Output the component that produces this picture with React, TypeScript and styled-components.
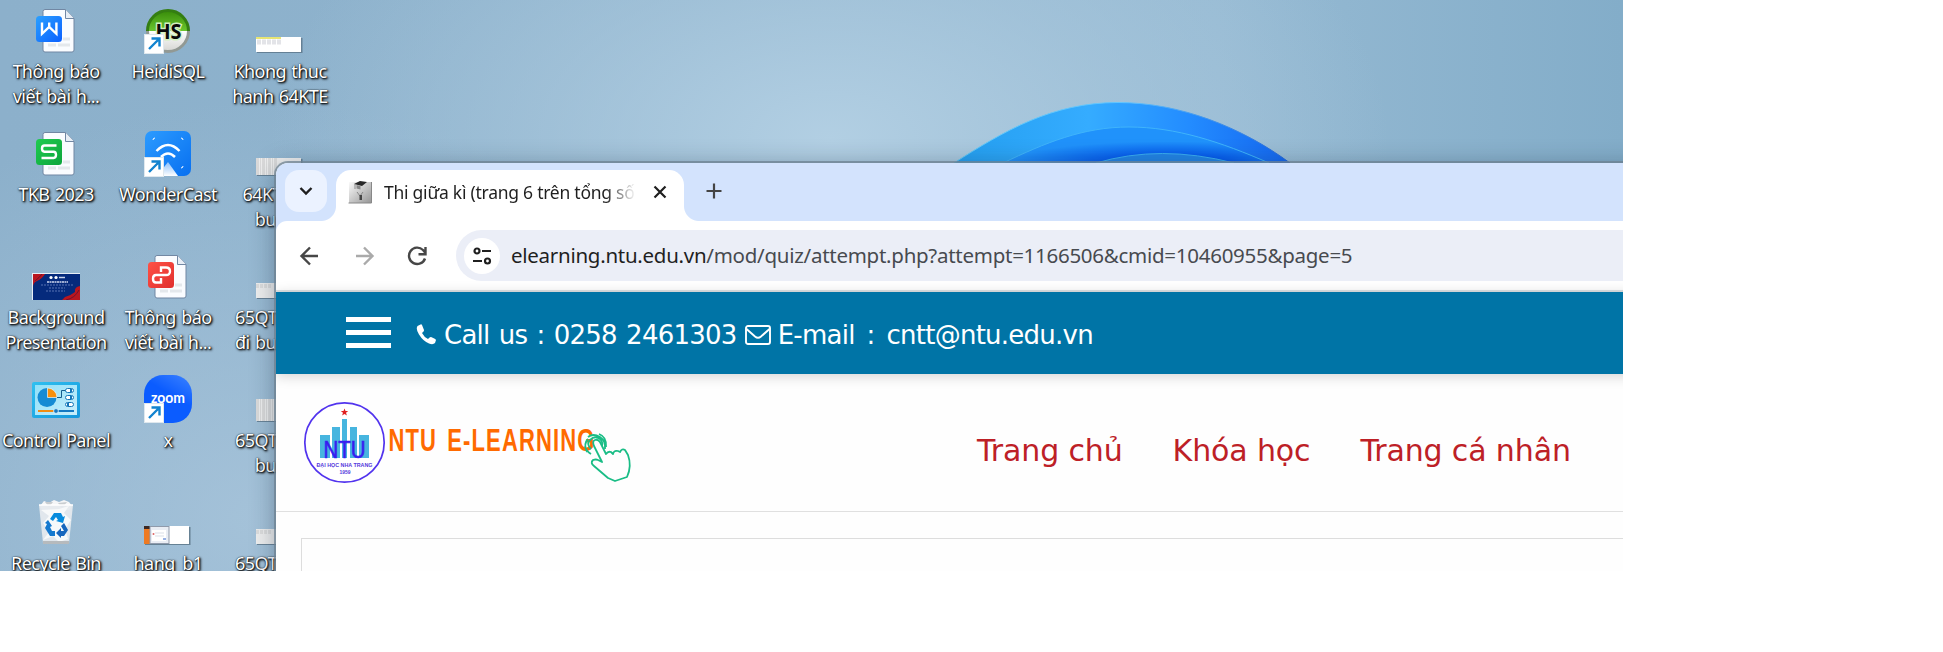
import React from 'react';
import styled, { createGlobalStyle } from 'styled-components';

const GlobalStyle = createGlobalStyle`
  * { box-sizing: border-box; }
  body { margin: 0; background: #fff; }
  svg { display: block; flex: none; }
`;

const Desktop = styled.main`
  position: relative;
  width: 1623px;
  height: 571px;
  overflow: hidden;
  background:
    radial-gradient(ellipse 560px 330px at 830px 140px, #b2cfe3 0%, rgba(171, 201, 222, 0.6) 50%, rgba(160, 192, 215, 0) 100%),
    radial-gradient(ellipse 500px 420px at 260px 520px, rgba(170, 198, 220, 0.8), rgba(160, 190, 213, 0)),
    linear-gradient(90deg, #8cb0cb 0%, #8fb4ce 45%, #96bad3 75%, #83adc9 100%);
`;

const Bloom = styled.svg`
  position: absolute;
  left: 940px;
  top: 90px;
`;

const IconGrid = styled.div`
  display: grid;
  grid-auto-flow: column;
  grid-template-rows: repeat(5, 123px);
  grid-auto-columns: 112px;
  width: 336px;
`;

const Shortcut = styled.div`
  display: flex;
  flex-direction: column;
  align-items: center;
  padding-top: 6px;
`;

const Art = styled.div`
  display: flex;
  flex-direction: column;
  align-items: center;
  justify-content: flex-end;
  height: 48px;
`;

const Label = styled.div`
  margin-top: 5px;
  font: 18px/24.6px 'Noto Sans', 'Open Sans', sans-serif;
  letter-spacing: -0.55px;
  word-spacing: 1.2px;
  color: #fff;
  text-align: center;
  white-space: pre;
  text-shadow: 0 0 1px #000, 1px 1px 2px #000, 1px 1px 3px rgba(0, 0, 0, 0.8);
`;

const BrowserWindow = styled.section`
  position: absolute;
  left: 276px;
  top: 163px;
  width: 1400px;
  height: 430px;
  border-radius: 12px 0 0 0;
  background: #fefefe;
  box-shadow: 0 0 0 2px rgba(110, 130, 145, 0.75), 0 4px 26px rgba(20, 40, 60, 0.4);
  overflow: hidden;
`;

const TabStrip = styled.div`
  display: flex;
  height: 58px;
  padding: 7px 0 0 9px;
  background: #d3e3fd;
`;

const SearchTabs = styled.button`
  display: grid;
  place-items: center;
  width: 42px;
  height: 42px;
  margin-right: 9px;
  padding: 0;
  border: 0;
  border-radius: 14px;
  background: #ebf2ff;
`;

const Tab = styled.div`
  position: relative;
  display: flex;
  align-items: center;
  width: 348px;
  height: 51px;
  padding: 0 17px 8px 12px;
  border-radius: 15px 15px 0 0;
  background: #fff;
  &::before, &::after {
    content: '';
    position: absolute;
    bottom: 0;
    width: 15px;
    height: 15px;
  }
  &::before { left: -15px; background: radial-gradient(circle at 0 0, transparent 14.5px, #fff 15.5px); }
  &::after { right: -15px; background: radial-gradient(circle at 100% 0, transparent 14.5px, #fff 15.5px); }
`;

const TabTitle = styled.span`
  width: 252px;
  margin: 1px 17px 0 12px;
  overflow: hidden;
  white-space: nowrap;
  font: 17.5px/26px 'Noto Sans', 'Open Sans', sans-serif;
  letter-spacing: -0.25px;
  color: #1f1f1f;
  mask-image: linear-gradient(90deg, #000 88%, transparent 100%);
`;

const NewTab = styled.button`
  width: 42px;
  height: 42px;
  margin-left: 9px;
  padding: 0;
  display: grid;
  place-items: center;
  border: 0;
  background: none;
`;

const StripBase = styled.div`
  background: #d3e3fd;
`;

const Toolbar = styled.div`
  display: flex;
  align-items: center;
  height: 71px;
  padding-left: 20px;
  border-bottom: 2px solid #dde2e4;
  border-radius: 11px 0 0 0;
  background: #fff;
`;

const NavIcons = styled.div`
  display: flex;
  gap: 26px;
  width: 160px;
`;

const AddressBar = styled.div`
  display: flex;
  align-items: center;
  flex: 1;
  height: 51px;
  padding-left: 8px;
  border-radius: 26px 0 0 26px;
  background: #ebeef7;
`;

const SiteInfo = styled.span`
  display: grid;
  place-items: center;
  width: 36px;
  height: 36px;
  border-radius: 50%;
  background: #fff;
`;

const Url = styled.span`
  margin: -2px 0 0 11px;
  font: 20.5px/30px 'Noto Sans', 'Open Sans', sans-serif;
  letter-spacing: -0.27px;
  white-space: nowrap;
  color: #474a4f;
`;

const Host = styled.span`
  color: #1f1f1f;
`;

const ContactBar = styled.div`
  position: relative;
  display: flex;
  align-items: center;
  height: 82px;
  padding-left: 70px;
  background: #0074a6;
  box-shadow: 0 2px 12px rgba(0, 0, 0, 0.18);
`;

const Burger = styled.div`
  display: flex;
  flex-direction: column;
  gap: 8px;
  width: 45px;
  margin: -1px 25px 0 0;
`;

const BurgerLine = styled.span`
  height: 5px;
  background: #fff;
`;

const ContactIcon = styled.svg<{ $drop: number }>`
  margin-top: ${p => p.$drop}px;
`;

const Contact = styled.span<{ $wordGap: number }>`
  margin: 3px 8px 0 7px;
  font: 26px/36px 'DejaVu Sans', Verdana, sans-serif;
  letter-spacing: -0.75px;
  word-spacing: ${p => p.$wordGap}px;
  white-space: pre;
  color: #fff;
`;

const SiteHeader = styled.header`
  display: flex;
  height: 138px;
  border-bottom: 1px solid #e0e0e0;
`;

const Menu = styled.nav`
  display: flex;
  margin: 56px 0 0 341px;
  gap: 50px;
`;

const MenuLink = styled.a`
  font: 30px/42px 'DejaVu Sans', Verdana, sans-serif;
  letter-spacing: -0.13px;
  white-space: nowrap;
  color: #bd2026;
`;

const ContentPanel = styled.div`
  height: 80px;
  margin: 26px 0 0 25px;
  border-top: 1px solid #ddd;
  border-left: 1px solid #ddd;
`;

const ShortcutArrow = () => (
  <g>
    <rect x="0" y="28" width="20" height="20" fill="#dfe8ee" />
    <rect x="1" y="29" width="18" height="18" fill="#fff" />
    <path d="M5 43 15 33M7.500 32.500h8v8" fill="none" stroke="#1283cf" strokeWidth="2.400" />
  </g>
);

const DocIcon = ({ from, to, kind }: { from: string; to: string; kind: 'w' | 's' | 'p' }) => (
  <svg width="40" height="46" viewBox="0 0 40 46">
    <defs>
      <linearGradient id={`doc-${kind}`} x1="0" y1="0" x2="1" y2="1">
        <stop stopColor={from} /><stop offset="1" stopColor={to} />
      </linearGradient>
    </defs>
    <path d="M9 1.500h20.500l8.500 9V42q0 2-2 2H9q-2 0-2-2V3.500q0-2 2-2Z" fill="#fafcff" stroke="#7187a3" />
    <path d="M29.500 1.500v9H38" fill="#e8eef5" stroke="#7187a3" />
    <path d="M12 37h8M22 37h12M27 31h7" stroke="#e4e8ec" strokeWidth="3" />
    <rect x="0" y="8" width="26" height="26" rx="3.500" fill={`url(#doc-${kind})`} />
    {kind === 'w' && <path d="M6 14.500v11.300l7.200-6.800 7.200 6.800V14.500M13.200 20v-5.500" fill="none" stroke="#fff" strokeWidth="2.400" />}
    {kind === 's' && <path d="M20.500 14.500H8.500q-2.500 0-2.500 3t2.500 3.200h9q2.500 0 2.500 3.100t-2.500 3.200H5.500" fill="none" stroke="#fff" strokeWidth="2.400" />}
    {kind === 'p' && <path d="M13 18v-4.500h5q4 0 4 3.800T18 21H8q-3 0-3 3.700T8 28.500h5V24" fill="none" stroke="#fff" strokeWidth="2.400" />}
  </svg>
);

const HeidiIcon = () => (
  <svg width="48" height="48" viewBox="0 0 48 48">
    <defs>
      <linearGradient id="heidi" x2="0" y2="1"><stop stopColor="#378b09" /><stop offset=".5" stopColor="#6bc62f" /><stop offset=".5" stopColor="#fff" /><stop offset="1" stopColor="#d5d5d2" /></linearGradient>
    </defs>
    <circle cx="24" cy="25" r="20.500" fill="url(#heidi)" />
    <path d="M3.500 25a20.500 20.500 0 0 1 41 0" fill="none" stroke="#347e12" strokeWidth="3" />
    <path d="M3.500 25a20.500 20.500 0 0 0 41 0" fill="none" stroke="#929994" strokeWidth="3" />
    <text x="24.500" y="32.500" textAnchor="middle" textLength="26" lengthAdjust="spacingAndGlyphs" fontFamily="Open Sans" fontWeight="700" fontSize="22" fill="#0a0a0a" stroke="#d4f0c0" strokeWidth="3" paintOrder="stroke">HS</text>
    <ShortcutArrow />
  </svg>
);

const WonderIcon = () => (
  <svg width="48" height="48" viewBox="0 0 48 48">
    <defs>
      <linearGradient id="wonder" x2="1" y2="1"><stop stopColor="#2c9bff" /><stop offset="1" stopColor="#0870f0" /></linearGradient>
      <linearGradient id="beam" x2="0" y2="1"><stop stopColor="#fff" stopOpacity=".5" /><stop offset="1" stopColor="#fff" /></linearGradient>
    </defs>
    <rect x="1" y="2" width="46" height="45" rx="7" fill="url(#wonder)" />
    <path d="M9 11q0-2 2-2M37 9q2 0 2 2M39 37q0 2-2 2" fill="none" stroke="#fff" />
    <path d="M12.500 22q11.500-12 23 0M17 28q7-7 14 0" fill="none" stroke="#fff" strokeWidth="2.500" />
    <path d="M13 47 24 33 34 47Z" fill="url(#beam)" />
    <ShortcutArrow />
  </svg>
);

const ZoomIcon = () => (
  <svg width="48" height="48" viewBox="0 0 48 48">
    <defs><linearGradient id="zm" x1="1" y1="0" x2=".7" y2=".5"><stop stopColor="#3d83ff" /><stop offset="1" stopColor="#0b5cff" /></linearGradient></defs>
    <rect width="48" height="48" rx="19" fill="url(#zm)" />
    <text x="24" y="28" textAnchor="middle" textLength="34" lengthAdjust="spacingAndGlyphs" fontFamily="Lato, sans-serif" fontWeight="700" fontSize="15.500" fill="#fff">zoom</text>
    <ShortcutArrow />
  </svg>
);

const ControlPanelIcon = () => (
  <svg width="48" height="41" viewBox="0 0 48 41">
    <defs>
      <linearGradient id="cpl" x2="1" y2="1"><stop stopColor="#8fe0f9" /><stop offset="1" stopColor="#c9eefb" /></linearGradient>
      <linearGradient id="cplEdge" x2="1" y2="1"><stop stopColor="#2fc0f0" /><stop offset="1" stopColor="#1597dc" /></linearGradient>
    </defs>
    <rect width="48" height="36" rx="2" fill="url(#cplEdge)" />
    <rect x="3" y="3" width="42" height="30" fill="url(#cpl)" />
    <circle cx="15" cy="15.500" r="9.500" fill="#168bd4" />
    <path d="M15.500 15.500V6a9.500 9.500 0 0 1 9.500 9.500Z" fill="#f7900c" stroke="#e9f8fd" strokeWidth=".7" />
    <path d="M25 15.500h4.500v-7H34" fill="none" stroke="#155d8d" />
    <g fill="#fff" stroke="#1577b9">
      <rect x="33.500" y="6.500" width="8" height="4" rx="2" /><rect x="33.500" y="13.500" width="8" height="4" rx="2" /><rect x="33.500" y="20.500" width="8" height="4" rx="2" />
    </g>
    <path d="M38 8.500h2M38 15.500h2M35 22.500h2" stroke="#1577b9" strokeWidth="3" />
    <path d="M6 29h17" stroke="#f08c12" strokeWidth="2" /><path d="M25 29h17" stroke="#1479c2" strokeWidth="2" />
    <circle cx="24" cy="29" r="2.400" fill="#1479c2" stroke="#e8f8ff" strokeWidth=".8" />
  </svg>
);

const RecycleIcon = () => (
  <svg width="38" height="46" viewBox="0 0 38 46">
    <path d="m3 6 4-5 5 2 5-3 5 2 5-2 5 2 3 4-3 4H5Z" fill="#f5f6f7" />
    <path d="m8 2 4 5 4-5M21 3l4 5 5-6" fill="#c9cdd0" />
    <path d="M2 5h34l-4 38q-13 2-26 0Z" fill="#e6eaee" fillOpacity=".94" />
    <path d="m4 10 8 6-6 7 6 9-6 8 10-4 6 6 9-3-3-10 6-9-7-7 5-7-10 3Z" fill="#f7f9fa" />
    <path d="M2 5h34" stroke="#fff" strokeWidth="1.500" /><path d="M6 42.500h26" stroke="#b6babd" strokeWidth="3" />
    <g fill="#078bdd">
      <path d="m13 19 4-6h7l2 4 2-1-2 7-7-2 2-1-2-3-3 4Z" />
      <path d="m11 20 4 6-2 1 2 4h3v5h-5l-5-8 2-4-2-1Z" fill="#1579cf" />
      <path d="m27 23 4 7-4 6h-3v2l-5-5 5-5v3h3l-3-5Z" fill="#1766bd" />
    </g>
  </svg>
);

const BackgroundIcon = () => (
  <svg width="48" height="27" viewBox="0 0 48 27">
    <rect width="48" height="27" fill="#e8eef5" /><rect x="1" y="1" width="47" height="26" fill="#052a7c" />
    <path d="M1 1h12Q10 6 5 8 2 9 1 13ZM48 13q-6 1-5 6-5 4-10 5l-3 3h18Z" fill="#b9161f" />
    <path d="M3 8q5-4 7-7M34 27q9-2 13-10" fill="none" stroke="#6c1232" />
    <circle cx="19" cy="4.500" r="1.600" fill="#fff" /><circle cx="24" cy="4.500" r="1.600" fill="#fff" /><path d="M27 4.500h6" stroke="#cbd5ed" strokeWidth="1.500" />
    <path d="M15 9h21" stroke="#cfd8ee" strokeWidth="1.500" strokeDasharray="2 .5" />
    <path d="M9 12h32M17 15h16M14 18h19" stroke="#6c86c2" strokeWidth=".8" strokeDasharray="2 1" />
  </svg>
);

const SheetThumb = ({ h, tone }: { h: number; tone: 'yellow' | 'grey' | 'plain' }) => (
  <svg width="48" height={h + 2} viewBox={`0 0 48 ${h + 2}`}>
    <rect x="1" y="1" width="45.500" height={h} fill="#526b7d" fillOpacity=".7" />
    <rect width="45" height={h} fill={tone === 'yellow' ? '#fff' : '#eee'} />
    {tone === 'yellow' && <><path d="M0 1h25" stroke="#dfdc45" strokeWidth="1.500" /><path d="M1 5h24" stroke="#e3e4e8" strokeWidth="5" strokeDasharray="4 1" /></>}
    {tone === 'grey' && <path d={`M0 ${h / 2}h22`} stroke="#dadada" strokeWidth={h} strokeDasharray="3 1 1 1" />}
    {tone === 'plain' && <path d="M0 3h16" stroke="#ddd" strokeWidth="4" strokeDasharray="3 1" />}
  </svg>
);

const HangThumb = () => (
  <svg width="48" height="20" viewBox="0 0 48 20">
    <rect x="1" y="1" width="45.500" height="18" fill="#4d6678" fillOpacity=".7" />
    <rect width="45" height="18" fill="#fff" />
    <rect width="6" height="18" fill="#ee7a22" /><path d="M0 0h6v3H0Z" fill="#3b2823" />
    <rect x="6" y=".5" width="19" height="17" fill="#e9edf4" stroke="#8f9aab" />
    <rect x="8" y="4" width="14" height="11" fill="#fff" /><circle cx="9.500" cy="8" r="1" fill="#d66" />
    <path d="M11 7h9M11 10h9" stroke="#c9d0dc" strokeWidth=".7" /><path d="M19 13h3" stroke="#36c" />
  </svg>
);

const shortcuts: { label: string; art: React.ReactNode }[] = [
  { label: 'Thông báo\nviết bài h...', art: <DocIcon kind="w" from="#2aa0ff" to="#0b60ff" /> },
  { label: 'TKB 2023', art: <DocIcon kind="s" from="#1fcb4f" to="#0da53c" /> },
  { label: 'Background\nPresentation', art: <BackgroundIcon /> },
  { label: 'Control Panel', art: <ControlPanelIcon /> },
  { label: 'Recycle Bin', art: <RecycleIcon /> },
  { label: 'HeidiSQL', art: <HeidiIcon /> },
  { label: 'WonderCast', art: <WonderIcon /> },
  { label: 'Thông báo\nviết bài h...', art: <DocIcon kind="p" from="#ff5246" to="#e02f2e" /> },
  { label: 'x', art: <ZoomIcon /> },
  { label: 'hang_b1', art: <HangThumb /> },
  { label: 'Khong thuc\nhanh 64KTE', art: <SheetThumb h={15} tone="yellow" /> },
  { label: '64KTE thi\nbuổi 1', art: <SheetThumb h={17} tone="grey" /> },
  { label: '65QTKD 12\nđi buổi học', art: <SheetThumb h={15} tone="plain" /> },
  { label: '65QTKD 12\nbuổi 1', art: <SheetThumb h={22} tone="grey" /> },
  { label: '65QTKD 12', art: <SheetThumb h={15} tone="plain" /> },
];

const BloomArt = () => (
  <Bloom width="370" height="75" viewBox="940 90 370 75">
    <defs>
      <linearGradient id="petal" x2="1"><stop stopColor="#249ff0" /><stop offset=".4" stopColor="#35acff" /><stop offset=".7" stopColor="#238cff" /><stop offset="1" stopColor="#1466ef" /></linearGradient>
      <radialGradient id="inner" cx=".62" cy="1" r=".6"><stop stopColor="#004be2" /><stop offset=".35" stopColor="#0459ed" /><stop offset="1" stopColor="#2092fb" /></radialGradient>
      <linearGradient id="rim" x2="1"><stop stopColor="#64c9f5" /><stop offset=".5" stopColor="#62c6ff" /><stop offset="1" stopColor="#2366d8" /></linearGradient>
    </defs>
    <path d="M954 163C1004 131 1052 102.500 1118 102.500c62 0 124 25 172 60.500Z" fill="url(#petal)" stroke="url(#rim)" />
    <path d="M1003 163c42-20 80-36 126-36 47 0 92 15 140 36Z" fill="url(#inner)" stroke="#3fb4fb" />
    <path d="M1096 163q64-19 138 0Z" fill="#2284e6" stroke="#3aaff2" />
  </Bloom>
);

const LogoArt = () => (
  <svg width="360" height="120" viewBox="276 374 360 120">
    <circle cx="344.500" cy="442.500" r="39.700" fill="#fff" stroke="#5234ee" strokeWidth="1.700" />
    <path d="m344.500 408.500 1 2.600h2.700l-2.200 1.700.9 2.800-2.400-1.700-2.400 1.700.9-2.800-2.200-1.700h2.700Z" fill="#e02020" />
    <path d="M320 435h10v23h-10ZM332 427h8v31h-8ZM342 419h5v39h-5ZM350 427h7v31h-7ZM359 435h10v23h-10Z" fill="#47b5df" />
    <text x="323.500" y="458" textLength="42" lengthAdjust="spacingAndGlyphs" fontFamily="Liberation Sans" fontSize="23" fill="#381df0" stroke="#381df0" strokeWidth=".6">NTU</text>
    <text x="316.500" y="466.500" textLength="56" lengthAdjust="spacingAndGlyphs" fontFamily="Liberation Sans" fontWeight="700" fontSize="6" fill="#5338dc">ĐẠI HỌC NHA TRANG</text>
    <text x="339.500" y="473.500" textLength="11" lengthAdjust="spacingAndGlyphs" fontFamily="Liberation Sans" fontWeight="700" fontSize="5.500" fill="#5338dc">1959</text>
    <text transform="translate(388.500 451) scale(.71 1)" textLength="290" wordSpacing="4" fontFamily="Liberation Sans" fontWeight="700" fontSize="31" fill="#ff6a00">NTU E-LEARNING</text>
    <g transform="translate(280 380)" fill="none" stroke="#1abd86" strokeWidth="1.800" strokeLinejoin="round">
      <path d="M322 82 314 66q-2-5 1-6t5 2l6 12q2-3 5-2l2 2q1-4 5-3l2 1q2-4 5-2l3 5q4 11-1 22l-12 4-7-3-14-12q-4-3-1-6 3-1 5 0Z" />
      <path d="M311 69q-5-5-1-9 5-5 10-1 3 3 2 7M307 72q-4-8 1-13M308 57q5-4 12 0 6 4 5 12M319 54q8 3 7 13M311 74q-5-3-6-8" />
    </g>
  </svg>
);

export default function App() {
  return (
    <>
      <GlobalStyle />
      <Desktop>
        <BloomArt />
        <IconGrid>
          {shortcuts.map((s, i) => (
            <Shortcut key={i}>
              <Art>{s.art}</Art>
              <Label>{s.label}</Label>
            </Shortcut>
          ))}
        </IconGrid>
        <BrowserWindow>
          <TabStrip>
            <SearchTabs>
              <svg width="16" height="16" viewBox="0 0 16 16"><path d="m2.500 5 5.500 5.500L13.500 5" fill="none" stroke="#1f1f1f" strokeWidth="2.400" /></svg>
            </SearchTabs>
            <Tab>
              <svg width="24" height="24" viewBox="0 0 24 24">
                <defs><linearGradient id="fav" x2="1" y2="1"><stop stopColor="#fafafa" /><stop offset="1" stopColor="#969696" /></linearGradient></defs>
                <path d="M1 2h22v21H1Z" fill="url(#fav)" /><path d="M.5 23h23V2" fill="none" stroke="#888" />
                <path d="m6 4 6-3 7 1-5 4Z" fill="#262626" /><path d="M8.500 5v3.500l4 1V6" fill="#888" /><path d="m9 12 3 4 3-4M7 4v5" stroke="#777" strokeWidth=".8" fill="none" />
                <path d="M11.500 15h2.500v5h-2.500Z" fill="#444" />
              </svg>
              <TabTitle>Thi giữa kì (trang 6 trên tổng số</TabTitle>
              <svg width="14" height="14" viewBox="0 0 14 14"><path d="m1.500 1.500 11 11M12.500 1.500l-11 11" stroke="#1f1f1f" strokeWidth="2.200" /></svg>
            </Tab>
            <NewTab>
              <svg width="18" height="18" viewBox="0 0 18 18"><path d="M9 1.500v15M1.500 9h15" stroke="#444" strokeWidth="2.200" /></svg>
            </NewTab>
          </TabStrip>
          <StripBase>
            <Toolbar>
              <NavIcons>
                <svg width="28" height="28" viewBox="0 0 28 28"><path d="M22 14H6M14 5.500 5.500 14l8.500 8.500" fill="none" stroke="#474747" strokeWidth="2.400" /></svg>
                <svg width="28" height="28" viewBox="0 0 28 28"><path d="M6 14h16M14 5.500l8.500 8.500-8.500 8.500" fill="none" stroke="#aaa" strokeWidth="2.400" /></svg>
                <svg width="28" height="28" viewBox="0 0 28 28"><path d="M21 16.500A8.200 8.200 0 1 1 19 8l2.500 3M21.500 5v7.200h-7" fill="none" stroke="#474747" strokeWidth="2.400" /></svg>
              </NavIcons>
              <AddressBar>
                <SiteInfo>
                  <svg width="20" height="18" viewBox="0 0 20 18" fill="none" stroke="#1f1f1f" strokeWidth="2.200"><circle cx="5" cy="4" r="2.500" /><path d="M10 4h9M1 14h9" /><circle cx="15.500" cy="14" r="2.500" /></svg>
                </SiteInfo>
                <Url><Host>elearning.ntu.edu.vn</Host>/mod/quiz/attempt.php?attempt=1166506&amp;cmid=10460955&amp;page=5</Url>
              </AddressBar>
            </Toolbar>
          </StripBase>
          <ContactBar>
            <Burger><BurgerLine /><BurgerLine /><BurgerLine /></Burger>
            <ContactIcon $drop={2} width="21" height="21" viewBox="0 0 21 21"><path d="M4.500.5 1.500 2Q-.5 5 3 10.500 7 17 13 19.500q4 1.500 6-.5l1-3q0-1-5-3-1-.3-3 2-4-2-6-6 2.500-2 2-3L6 1Q5.500 0 4.500.5Z" fill="#fff" /></ContactIcon>
            <Contact $wordGap={1.7}>Call us : 0258 2461303</Contact>
            <ContactIcon $drop={4} width="26" height="20" viewBox="0 0 26 20" fill="none" stroke="#fff" strokeWidth="1.900"><rect x="1" y="1" width="24" height="18" rx="2" /><path d="m1.500 4 8.500 7.500q3 2.500 6 0L24.500 4" /></ContactIcon>
            <Contact $wordGap={4.4}>E-mail : cntt@ntu.edu.vn</Contact>
          </ContactBar>
          <SiteHeader>
            <LogoArt />
            <Menu>
              <MenuLink>Trang chủ</MenuLink>
              <MenuLink>Khóa học</MenuLink>
              <MenuLink>Trang cá nhân</MenuLink>
            </Menu>
          </SiteHeader>
          <ContentPanel />
        </BrowserWindow>
      </Desktop>
    </>
  );
}
